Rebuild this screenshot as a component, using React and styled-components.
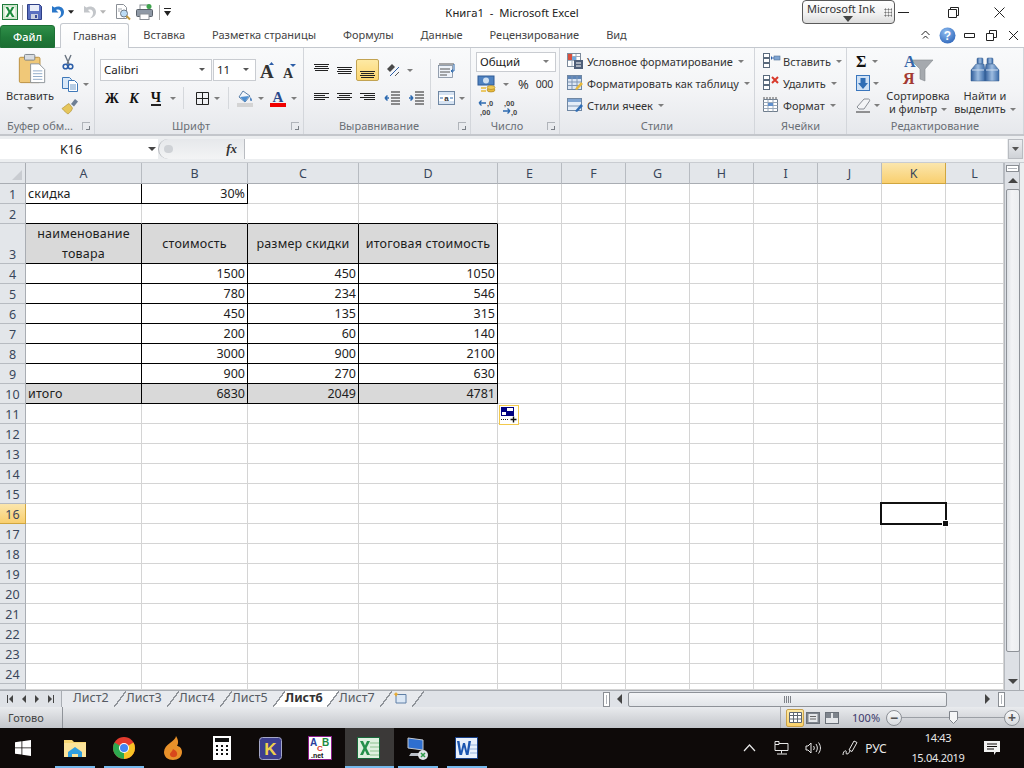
import React from 'react';
import styled, { createGlobalStyle } from 'styled-components';

const GlobalStyle = createGlobalStyle`
  html, body { margin: 0; padding: 0; background: #fff; }
  body { font-family: "Noto Sans", "Open Sans", sans-serif; overflow: hidden; }
  svg { display: block; flex: none; overflow: visible; }
`;

const Page = styled.div`
  width: 1024px;
  height: 768px;
  display: flex;
  flex-direction: column;
  overflow: hidden;
  color: #3b3b3b;
  font-size: 11px;
`;

/* title bar */
const TitleBar = styled.div`
  height: 24px;
  display: grid;
  grid-template-columns: 1fr auto 1fr;
  align-items: center;
  background: #fff;
  flex: none;
`;
const Qat = styled.div`
  display: flex;
  align-items: center;
  padding-left: 2px;
`;
const QatSep = styled.div`
  width: 1px;
  height: 15px;
  background: #a8a8a8;
  margin: 0 ${p => p.$gap || 7}px;
`;
const QatBtn = styled.div`
  display: flex;
  align-items: center;
  margin-right: ${p => p.$mr || 0}px;
`;
const TitleText = styled.div`
  font-size: 11.25px;
  color: #222;
  white-space: pre;
`;
const WindowControls = styled.div`
  display: flex;
  align-items: flex-start;
  justify-content: flex-end;
  height: 24px;
  padding-right: 2px;
`;
const InkBar = styled.div`
  width: 93px;
  height: 24px;
  box-sizing: border-box;
  border: 1px solid #5a5a5a;
  border-radius: 4px;
  background: linear-gradient(#fff, #f0f0f0 60%, #dcdcdc);
  font-size: 11px;
  color: #333;
  padding-left: 4px;
  line-height: 15px;
  position: relative;
  margin-right: 1px;
  white-space: nowrap;
`;
const InkCaret = styled.div`
  width: 0;
  height: 0;
  border: 5px solid transparent;
  border-top: 6px solid #444;
  border-bottom: 0;
  margin-left: 36px;
`;
const InkGrip = styled.div`
  position: absolute;
  right: 2px;
  top: 7px;
  width: 8px;
  height: 9px;
  background-image: radial-gradient(#777 45%, transparent 50%);
  background-size: 3px 3px;
`;
const WinBtn = styled.div`
  width: 46px;
  height: 24px;
  display: flex;
  align-items: center;
  justify-content: center;
  margin-left: ${p => p.$ml || 0}px;
`;

/* tabs */
const TabRow = styled.div`
  height: 24px;
  flex: none;
  display: flex;
  align-items: flex-end;
  background: #fff;
  position: relative;
  box-sizing: border-box;
  border-bottom: 1px solid #c4c8ce;
`;
const FileTab = styled.div`
  width: 55px;
  height: 23px;
  box-sizing: border-box;
  margin-bottom: -1px;
  border-radius: 3px 3px 0 0;
  background: linear-gradient(#2f8f49, #207a39 55%, #1c6e33);
  border: 1px solid #1d7135;
  color: #fff;
  font-size: 11px;
  font-weight: 500;
  text-align: center;
  line-height: 21px;
`;
const Tab = styled.div`
  box-sizing: border-box;
  height: 23px;
  padding: 0 ${p => (p.$active ? 12 : 13.5)}px;
  margin-left: ${p => p.$ml || 0}px;
  font-size: 11px;
  line-height: 22px;
  color: #444;
  white-space: nowrap;
  ${p => p.$active && `
    background: linear-gradient(#fff, #f8f9fa);
    border: 1px solid #c4c8ce;
    border-bottom: 0;
    border-radius: 3px 3px 0 0;
    margin-bottom: -1px;
    z-index: 1;
    height: 25px;
    line-height: 23px;
  `}
`;
const TabTools = styled.div`
  margin-left: auto;
  display: flex;
  align-items: center;
  height: 23px;
`;
const TabTool = styled.div`
  width: 22px;
  display: flex;
  justify-content: center;
`;

/* ribbon */
const Ribbon = styled.div`
  height: 86px;
  flex: none;
  display: flex;
  background: linear-gradient(#f9fafb, #f3f4f6 50%, #e6e8ec);
`;
const Group = styled.div`
  width: ${p => p.$w}px;
  flex: none;
  box-sizing: border-box;
  display: flex;
  flex-direction: column;
  border-right: 1px solid #d3d6db;
`;
const GroupBody = styled.div`
  flex: 1;
  min-height: 0;
  display: flex;
  padding: ${p => p.$pad || '3px 0 0 0'};
`;
const GroupLabel = styled.div`
  height: 15px;
  flex: none;
  position: relative;
  text-align: center;
  line-height: 14px;
  color: #6a6f76;
  font-size: 11px;
  padding-right: ${p => p.$pr || 0}px;
  white-space: nowrap;
`;
const Launcher = styled.div`
  position: absolute;
  right: 4px;
  top: 3px;
  width: 7px;
  height: 7px;
  border-left: 1px solid #b0b4ba;
  border-top: 1px solid #b0b4ba;
  &::after {
    content: '';
    position: absolute;
    right: 0;
    bottom: 0;
    width: 3px;
    height: 3px;
    border-right: 1px solid #7a7f86;
    border-bottom: 1px solid #7a7f86;
  }
`;
const Caret = styled.span`
  display: inline-block;
  flex: none;
  width: 0;
  height: 0;
  border: 3px solid transparent;
  border-top: 3px solid ${p => p.$dark ? '#555' : '#7d7d7d'};
  border-bottom: 0;
  margin: ${p => p.$m || '0 0 0 5px'};
`;
const Column = styled.div`
  display: flex;
  flex-direction: column;
  width: ${p => (p.$w ? `${p.$w}px` : 'auto')};
  gap: ${p => p.$gap || 0}px;
  padding-left: ${p => p.$pl || 0}px;
`;
const Row = styled.div`
  display: flex;
  align-items: center;
  height: ${p => p.$h || 22}px;
  color: #333;
  white-space: nowrap;
  padding-left: ${p => p.$pl || 0}px;
`;
const RowIcon = styled.div`
  width: ${p => p.$w || 20}px;
  flex: none;
  display: flex;
  align-items: center;
`;
const BigButton = styled.div`
  width: ${p => p.$w}px;
  flex: none;
  display: flex;
  flex-direction: column;
  align-items: center;
  line-height: 13px;
  color: #333;
  text-align: center;
  white-space: nowrap;
`;
const BigIcon = styled.div`
  box-sizing: border-box;
  height: ${p => p.$h || 38}px;
  padding: ${p => p.$pad || 0};
  display: flex;
  align-items: flex-start;
  justify-content: center;
`;
const Select = styled.div`
  box-sizing: border-box;
  width: ${p => p.$w}px;
  height: ${p => p.$h || 22}px;
  border: 1px solid #c9ccd1;
  background: #fff;
  display: flex;
  align-items: center;
  justify-content: space-between;
  padding: 0 6px 1px 3px;
  font-size: 11.5px;
  color: #222;
  margin-right: ${p => p.$mr || 0}px;
`;
const ToolSep = styled.div`
  width: 1px;
  height: ${p => p.$h || 22}px;
  background: #d5d8dc;
  margin: 0 ${p => p.$m || 0}px;
  flex: none;
`;
const ToolBox = styled.div`
  width: ${p => p.$w || 22}px;
  height: 22px;
  flex: none;
  display: flex;
  align-items: center;
  justify-content: ${p => p.$justify || 'center'};
  padding-right: ${p => p.$pr || 0}px;
  box-sizing: border-box;
  ${p => p.$on && `
    background: linear-gradient(#fde9a4, #fdd66f);
    border: 1px solid #c2a352;
    border-radius: 2px;
  `}
`;
const BoldGlyph = styled.span`
  font-family: "Liberation Serif", serif;
  font-weight: 700;
  font-style: ${p => (p.$i ? 'italic' : 'normal')};
  font-size: ${p => p.$s || 14}px;
  color: #111;
  border-bottom: ${p => (p.$u ? '2px solid #222' : '0')};
  line-height: 13px;
`;
const NumText = styled.span`
  font-size: ${p => p.$s || 12}px;
  color: #333;
  margin: ${p => p.$m || 0};
  letter-spacing: ${p => p.$ls || 0}px;
`;

/* formula bar */
const FormulaBar = styled.div`
  flex: none;
  height: 29px;
  box-sizing: border-box;
  padding: 5px 0 3px;
  display: flex;
  background: linear-gradient(#c3c6cb 0, #c3c6cb 2px, #eceef0 2px);
  border-bottom: 1px solid #c9ccd1;
`;
const NameBox = styled.div`
  width: 158px;
  flex: none;
  background: #fff;
  display: flex;
  align-items: center;
  font-size: 12.5px;
  color: #222;
  padding-left: 60px;
  box-sizing: border-box;
  position: relative;
`;
const NameCaret = styled.div`
  position: absolute;
  right: 2px;
  top: 8px;
  width: 0;
  height: 0;
  border: 4px solid transparent;
  border-top: 4px solid #444;
  border-bottom: 0;
`;
const FxArea = styled.div`
  width: 87px;
  flex: none;
  background: linear-gradient(#e6e8eb, #f3f4f5);
  border-right: 1px solid #b9bcc1;
  box-sizing: border-box;
  border-radius: 11px 0 0 11px;
  border-left: 1px solid #b4b7bc;
  display: flex;
  align-items: center;
  justify-content: flex-end;
  padding-right: 7px;
  position: relative;
  font-family: "Liberation Serif", serif;
  font-style: italic;
  font-weight: 700;
  font-size: 13px;
  color: #333;
`;
const FxDot = styled.div`
  position: absolute;
  left: 5px;
  top: 6px;
  width: 9px;
  height: 8px;
  border-radius: 4px;
  background: #cfd2d6;
`;
const FormulaInput = styled.div`
  flex: 1;
  background: #fff;
`;
const ExpandBtn = styled.div`
  width: 15px;
  flex: none;
  margin: 0 1px;
  background: linear-gradient(#eceef1, #cfd2d7);
  border: 1px solid #b9bcc1;
  box-sizing: border-box;
  display: flex;
  align-items: center;
  justify-content: center;
`;

/* sheet */
const SheetArea = styled.div`
  height: 527px;
  flex: none;
  display: flex;
  background: #fff;
`;
const Grid = styled.div`
  width: 1004px;
  flex: none;
  display: grid;
  grid-template-columns: 26px 116px 106px 111px 139px repeat(7, 64px) 58px;
  grid-template-rows: 21px 20px 20px 40px repeat(21, 20px) 6px;
  overflow: hidden;
  font-size: 12.5px;
  color: #1d1d1d;
`;
const Corner = styled.div`
  background: #e3e6ea;
  border-right: 1px solid #a9adb3;
  border-bottom: 1px solid #a9adb3;
  position: relative;
  &::after {
    content: '';
    position: absolute;
    right: 3px;
    bottom: 3px;
    border: 5px solid transparent;
    border-right: 5px solid #c9ccd1;
    border-bottom: 5px solid #c9ccd1;
  }
`;
const ColHead = styled.div`
  background: ${p => (p.$sel ? 'linear-gradient(#fbe6ad, #f9cf6f)' : '#e3e6ea')};
  border-right: 1px solid ${p => (p.$sel ? '#d0a63f' : '#b7bbc1')};
  border-bottom: 1px solid ${p => (p.$sel ? '#d0a63f' : '#a9adb3')};
  display: flex;
  align-items: center;
  justify-content: center;
  color: #39465a;
  font-size: 12.5px;
`;
const RowHead = styled.div`
  background: ${p => (p.$sel ? 'linear-gradient(#fbe6ad, #f9cf6f)' : '#e3e6ea')};
  border-right: 1px solid ${p => (p.$sel ? '#d0a63f' : '#a9adb3')};
  border-bottom: 1px solid ${p => (p.$sel ? '#d0a63f' : '#b7bbc1')};
  display: flex;
  align-items: flex-end;
  justify-content: center;
  color: #39465a;
  font-size: 12.5px;
  line-height: 17px;
`;
const Cell = styled.div`
  box-sizing: border-box;
  min-width: 0;
  position: relative;
  background: ${p => (p.$fill ? '#d9d9d9' : '#fff')};
  border-right: 1px solid ${p => (p.$r ? '#000' : '#d4d4d4')};
  border-bottom: 1px solid ${p => (p.$b ? '#000' : '#d4d4d4')};
  display: flex;
  align-items: ${p => (p.$head ? 'center' : 'flex-end')};
  justify-content: ${p => p.$align || 'flex-start'};
  text-align: ${p => (p.$head ? 'center' : 'left')};
  padding: ${p => (p.$head ? '1px 2px 0' : '0 2px')};
  line-height: ${p => (p.$head ? 20 : 18)}px;
  letter-spacing: ${p => (p.$align === 'flex-end' ? 0 : 0.2)}px;
  white-space: ${p => (p.$head ? 'normal' : 'nowrap')};
`;
const CursorBox = styled.div`
  position: absolute;
  left: -2px;
  top: -2px;
  width: 67px;
  height: 23px;
  box-sizing: border-box;
  border: 2px solid #111;
  z-index: 3;
  &::after {
    content: '';
    position: absolute;
    right: -4px;
    bottom: -4px;
    width: 5px;
    height: 5px;
    background: #111;
    border: 1px solid #fff;
  }
`;
const SmartTag = styled.div`
  position: absolute;
  left: 1px;
  top: 1px;
  width: 20px;
  height: 20px;
  box-sizing: border-box;
  border: 1px solid #f2c94c;
  background: #fff;
  z-index: 3;
  display: flex;
  align-items: center;
  justify-content: center;
`;
const VScroll = styled.div`
  flex: 1;
  background: #dde0e5;
  border-left: 1px solid #b6bac0;
  display: flex;
  flex-direction: column;
  align-items: center;
  box-sizing: border-box;
  border-right: 4px solid #eceef0;
  box-shadow: inset -1px 0 0 #a9adb3;
  padding-top: 2px;
`;
const Splitter = styled.div`
  box-sizing: border-box;
  width: ${p => p.$w || 13}px;
  height: ${p => p.$h || 7}px;
  border: 1px solid #8a8e94;
  background: #fff;
  flex: none;
  display: flex;
  align-items: center;
  justify-content: center;
  &::after {
    content: '';
    background: #b0b4ba;
    width: ${p => (p.$v ? '1px' : '9px')};
    height: ${p => (p.$v ? '9px' : '1px')};
  }
`;
const ArrowBox = styled.div`
  height: ${p => p.$h || 16}px;
  flex: none;
  display: flex;
  align-items: ${p => p.$align || 'center'};
  justify-content: center;
  padding-bottom: ${p => p.$pb || 0}px;
  box-sizing: border-box;
`;
const VThumb = styled.div`
  width: 14px;
  flex: 1;
  box-sizing: border-box;
  border: 1px solid #8e9298;
  border-radius: 2px;
  background: linear-gradient(90deg, #dfe2e6, #f3f4f6 40%, #eceef0);
`;

/* sheet tabs */
const SheetBar = styled.div`
  height: 17px;
  flex: none;
  display: flex;
  align-items: stretch;
  background: #dfe2e7;
  border-top: 1px solid #a9adb3;
  box-sizing: border-box;
`;
const TabNav = styled.div`
  width: 62px;
  flex: none;
  display: flex;
  align-items: center;
  justify-content: space-around;
  padding: 0 3px;
  box-sizing: border-box;
  border-right: 1px solid #a9adb3;
`;
const SheetTabs = styled.div`
  width: 541px;
  flex: none;
  display: flex;
`;
const SheetTab = styled.div`
  position: relative;
  width: ${p => p.$w || 53}px;
  box-sizing: border-box;
  padding-left: ${p => p.$pl || 11}px;
  background: ${p => (p.$active ? '#fff' : '#e8eaee')};
  font-size: 12.5px;
  font-weight: ${p => (p.$active ? 700 : 400)};
  color: ${p => (p.$active ? '#333' : '#565b63')};
  line-height: 14px;
  white-space: nowrap;
  &::after {
    content: '';
    position: absolute;
    right: -11px;
    top: 0;
    z-index: 1;
    width: 12px;
    height: 16px;
    background: linear-gradient(to bottom right, ${p => (p.$active ? '#fff' : '#e8eaee')} 47%, #8f9399 47%, #8f9399 54%, transparent 54%);
  }
`;
const HScrollZone = styled.div`
  flex: 1;
  display: flex;
  align-items: center;
`;
const HThumb = styled.div`
  width: 319px;
  height: 15px;
  flex: none;
  box-sizing: border-box;
  border: 1px solid #8e9298;
  border-radius: 2px;
  background: linear-gradient(#f4f5f7, #e2e5e9);
  display: flex;
  align-items: center;
  justify-content: center;
`;
const Grip = styled.div`
  width: 7px;
  height: 7px;
  background: repeating-linear-gradient(90deg, #7f8389 0, #7f8389 1px, transparent 1px, transparent 2px);
`;

/* status bar */
const StatusBar = styled.div`
  height: 21px;
  flex: none;
  display: flex;
  align-items: center;
  background: linear-gradient(#e9ebee, #d6d8dc 50%, #c3c6cb);
  color: #444;
  font-size: 11px;
`;
const StatusText = styled.div`
  width: 63px;
  padding-left: 8px;
  box-sizing: border-box;
  border-right: 1px solid #8f9399;
  line-height: 21px;
  height: 21px;
`;
const StatusRight = styled.div`
  margin-left: auto;
  display: flex;
  align-items: center;
  height: 21px;
  border-left: 1px solid #a5a8ae;
  padding-left: 5px;
`;
const ViewBtn = styled.div`
  width: ${p => p.$w || 18}px;
  height: 18px;
  box-sizing: border-box;
  display: flex;
  align-items: center;
  justify-content: center;
  ${p => p.$on && `
    background: linear-gradient(#fde9a4, #fbd26a);
    border: 1px solid #c9a24b;
    border-radius: 2px;
  `}
`;
const ZoomText = styled.div`
  color: #3d3a6b;
  width: 27px;
  margin: 0 7px 0 10px;
  font-size: 11px;
`;
const RoundBtn = styled.div`
  width: 16px;
  height: 16px;
  flex: none;
  box-sizing: border-box;
  border-radius: 50%;
  border: 1px solid #8b8f95;
  background: linear-gradient(#f8f9fa, #d7dade);
  display: flex;
  align-items: center;
  justify-content: center;
  font-size: 14px;
  line-height: 12px;
  font-weight: 700;
  color: #555;
`;
const SliderTrack = styled.div`
  width: 102px;
  height: 1px;
  background: #9b9fa5;
  position: relative;
  flex: none;
`;
const SliderThumb = styled.div`
  position: absolute;
  left: 47px;
  top: -6px;
`;

/* task bar */
const TaskBar = styled.div`
  height: 40px;
  flex: none;
  display: flex;
  background: #0e0a09;
  color: #e8e8e8;
`;
const StartBtn = styled.div`
  width: 51px;
  flex: none;
  display: flex;
  align-items: center;
  justify-content: center;
  padding-right: 5px;
  box-sizing: border-box;
`;
const TaskItem = styled.div`
  width: 49px;
  flex: none;
  box-sizing: border-box;
  display: flex;
  align-items: center;
  justify-content: center;
  padding-right: 2px;
  background: ${p => (p.$active ? '#3b3938' : 'transparent')};
  position: relative;
  &::after {
    content: '';
    display: ${p => (p.$open ? 'block' : 'none')};
    position: absolute;
    left: ${p => (p.$active ? 0 : 4)}px;
    right: ${p => (p.$active ? 0 : 5)}px;
    bottom: 0;
    height: 2px;
    background: #76b9ed;
  }
`;
const Tray = styled.div`
  margin-left: auto;
  display: flex;
  align-items: center;
  padding-right: 24px;
`;
const TrayIcon = styled.div`
  width: ${p => p.$w}px;
  margin-left: ${p => p.$ml || 0}px;
  display: flex;
  justify-content: center;
  flex: none;
`;
const Lang = styled.div`
  width: 34px;
  text-align: center;
  font-size: 12px;
`;
const Clock = styled.div`
  width: 60px;
  margin: 0 16px 0 15px;
  text-align: center;
  font-size: 11px;
  letter-spacing: -0.3px;
  line-height: 20px;
`;

/* icons */
const ExcelLogo = ({ s = 16 }) => (
  <svg width={s} height={s} viewBox="0 0 16 16">
    <rect x=".5" y=".5" width="15" height="15" fill="#e9f3e6" stroke="#1e7a3a" />
    <rect x="2" y="2" width="12" height="12" fill="#f6fbf2" stroke="#8dc28f" strokeWidth=".6" />
    <path d="M3.500 3l3 5-3 5h2.500l2-3.600 2 3.600h2.600l-3.200-5 3-5h-2.500L8 6.500 6.100 3z" fill="#1c8a3e" />
  </svg>
);
const Save = () => (
  <svg width="15" height="16" viewBox="0 0 15 16">
    <path d="M.5.500h12l2 2v13H.5z" fill="#5a6fc0" stroke="#2e3f86" />
    <rect x="3" y="1" width="9" height="6" fill="#e9edf8" />
    <rect x="4" y="10" width="7" height="5" fill="#c8cede" />
    <rect x="8" y="11" width="2" height="3" fill="#3c4c98" />
  </svg>
);
const Undo = ({ c = '#2a77c9' }) => (
  <svg width="14" height="15" viewBox="0 0 14 15">
    <path d="M1 1v6.500h6.500L5 5c3-1.500 5.500.5 5 3.500-.3 2-1.300 3.500-3 5 4-1 6-3.500 6-6.500 0-4.500-5-7-9.500-4.500L1 1z" fill={c} />
  </svg>
);
const SmallCaret = ({ c = '#222', w = 7 }) => (
  <svg width={w} height="4" viewBox="0 0 7 4"><path d="M0 0h7L3.500 4z" fill={c} /></svg>
);
const Preview = () => (
  <svg width="16" height="16" viewBox="0 0 16 16">
    <path d="M1.500.500h7l3 3v11h-10z" fill="#fff" stroke="#8a8f96" />
    <circle cx="9" cy="9.500" r="3.500" fill="#bcdcf5" stroke="#6d7a88" />
    <path d="M11.500 12l3.500 3.500" stroke="#c29a3e" strokeWidth="2" />
    <path d="M3 5h4M3 7h2" stroke="#a7abb1" />
  </svg>
);
const Printer = () => (
  <svg width="17" height="16" viewBox="0 0 17 16">
    <rect x="4" y="1" width="9" height="5" fill="#fff" stroke="#8a8f96" />
    <rect x=".5" y="5.500" width="16" height="7" rx="1" fill="#8f99a6" stroke="#59616b" />
    <rect x="4" y="10" width="9" height="5.500" fill="#fff" stroke="#8a8f96" />
    <circle cx="13" cy="2.500" r="2.500" fill="#3fa34d" />
  </svg>
);
const QatMenu = () => (
  <svg width="7" height="8" viewBox="0 0 7 8"><path d="M0 0h7v1H0zM0 3h7L3.500 8z" fill="#222" /></svg>
);
const WinLine = ({ d, w = 11 }) => (
  <svg width={w} height={w} viewBox="0 0 11 11"><path d={d} fill="none" stroke="#222" /></svg>
);
const Help = () => (
  <svg width="17" height="17" viewBox="0 0 17 17">
    <defs>
      <radialGradient id="hlp" cx=".4" cy=".3" r=".8"><stop offset="0" stopColor="#8fbdf0" /><stop offset="1" stopColor="#2a62b8" /></radialGradient>
    </defs>
    <circle cx="8.500" cy="8.500" r="8" fill="url(#hlp)" />
    <text x="8.500" y="13" textAnchor="middle" fontSize="12" fontWeight="700" fill="#fff" fontFamily="Liberation Sans">?</text>
  </svg>
);
const Paste = () => (
  <svg width="28" height="30" viewBox="0 0 28 32">
    <rect x=".5" y="3.500" width="22" height="27" rx="1.500" fill="#f0c878" stroke="#b98d3c" />
    <rect x="6" y=".5" width="11" height="6" rx="1" fill="#d9dde2" stroke="#7d838a" />
    <path d="M12.500 10.500h9l6 6v14h-15z" fill="#fff" stroke="#8c9299" />
    <path d="M15 18h10M15 21h10M15 24h10M15 27h10" stroke="#8da9c8" />
  </svg>
);
const Scissors = () => (
  <svg width="12" height="15" viewBox="0 0 12 15">
    <path d="M3 0l4 9M9 0L5 9" stroke="#6a7480" strokeWidth="1.400" />
    <circle cx="3.500" cy="11.500" r="2.300" fill="none" stroke="#2c5ea8" strokeWidth="1.600" />
    <circle cx="8.500" cy="11.500" r="2.300" fill="none" stroke="#2c5ea8" strokeWidth="1.600" />
  </svg>
);
const Copy = () => (
  <svg width="16" height="15" viewBox="0 0 16 15">
    <path d="M.5.500h7l2 2v9h-9z" fill="#d9e8f8" stroke="#3f78b8" />
    <path d="M6.500 3.500h6l3 3v8h-9z" fill="#fff" stroke="#3f78b8" />
    <path d="M8 8h6M8 10h6M8 12h6" stroke="#6f9bcb" />
  </svg>
);
const Brush = () => (
  <svg width="16" height="15" viewBox="0 0 16 15">
    <path d="M9 5l4-5 3 2.500-4 5z" fill="#6e7f95" />
    <path d="M10.500 9L7 4.500C4 6 2.500 8 0 9.500 2 12 4.500 14 6 15c2-1.500 4-3.500 4.500-6z" fill="#e6c65c" stroke="#a98a2a" strokeWidth=".6" />
  </svg>
);
const FontGrow = () => (
  <svg width="15" height="17" viewBox="0 0 15 17">
    <text x="0" y="16" fontFamily="Liberation Serif" fontWeight="700" fontSize="19" fill="#333">A</text>
    <path d="M9 3l2.500-3L14 3z" fill="#2c5ea8" />
  </svg>
);
const FontShrink = () => (
  <svg width="15" height="17" viewBox="0 0 15 17">
    <text x="1" y="16" fontFamily="Liberation Serif" fontWeight="700" fontSize="14" fill="#333">A</text>
    <path d="M8 2h6l-3 3z" fill="#2c5ea8" />
  </svg>
);
const Borders = () => (
  <svg width="13" height="13" viewBox="0 0 13 13">
    <path d="M.5.500h12v12H.5zM6.500.500v12M.5 6.500h12" fill="none" stroke="#222" />
  </svg>
);
const FillBucket = () => (
  <svg width="16" height="17" viewBox="0 0 16 17">
    <path d="M6 1l7 5-5 6-6-5z" fill="#f3f6fa" stroke="#5a7fa8" />
    <path d="M3 7l9-1-4 6z" fill="#4d8ed0" />
    <path d="M13.500 7c1.500 2 1.500 3.500 1 4s-2-.5-1-4z" fill="#2c6ab0" />
    <rect x="0" y="13" width="16" height="4" fill="#d4d4d4" />
  </svg>
);
const FontColor = () => (
  <svg width="16" height="17" viewBox="0 0 16 17">
    <text x="2.500" y="12" fontFamily="Liberation Serif" fontWeight="700" fontSize="15" fill="#2a4a8c">A</text>
    <rect x="0" y="13" width="16" height="4" fill="#f00000" />
  </svg>
);
const AlignLines = ({ rows, y = 2, gap = 2 }) => (
  <svg width="15" height="15" viewBox="0 0 15 15">
    {rows.map(([x, w], i) => (
      <rect key={i} x={x} y={y + i * gap} width={w} height="1" fill="#222" />
    ))}
  </svg>
);
const Orientation = () => (
  <svg width="16" height="15" viewBox="0 0 16 15">
    <path d="M2 6l5-5 3 3-5 5z" fill="#4a4a4a" />
    <path d="M5 13l9-9" stroke="#2c5ea8" />
    <path d="M10 13l4-4" stroke="#555" />
  </svg>
);
const Indent = ({ flip }) => (
  <svg width="16" height="15" viewBox="0 0 16 15">
    <path d="M7 1h9M7 4h9M7 7h9M7 10h9M7 13h9" stroke="#222" />
    <path d={flip ? 'M5 7L1 7M1 7l2.500-2.500M1 7l2.500 2.500' : 'M1 7h4M5 7L2.500 4.500M5 7L2.500 9.500'} stroke="#2c6ab0" strokeWidth="1.500" fill="none" />
  </svg>
);
const WrapText = () => (
  <svg width="17" height="15" viewBox="0 0 17 15">
    <rect x=".5" y="2.500" width="14" height="12" fill="#eef3fa" stroke="#7d8b9c" strokeWidth=".8" />
    <path d="M1 1h15M2 6h10M2 9h10M2 12h7" stroke="#555" />
    <path d="M16 1v7h-3M13 8l2-1.500M13 8l2 1.500" stroke="#2c6ab0" fill="none" />
  </svg>
);
const Merge = () => (
  <svg width="17" height="14" viewBox="0 0 17 14">
    <rect x=".5" y=".5" width="16" height="13" fill="#d6e3f2" stroke="#6f87a3" />
    <rect x="1" y="4" width="15" height="6" fill="#fff" />
    <text x="8.500" y="10" textAnchor="middle" fontSize="8" fontWeight="700" fill="#333" fontFamily="Liberation Sans">a</text>
    <path d="M2 7h3M15 7h-3" stroke="#2c6ab0" />
  </svg>
);
const Money = () => (
  <svg width="19" height="17" viewBox="0 0 19 17">
    <rect x="0" y="0" width="16" height="9" fill="#4f82c0" stroke="#2f5b96" />
    <ellipse cx="8" cy="4.500" rx="3" ry="3" fill="#cfe0f2" />
    <ellipse cx="13" cy="14" rx="4" ry="2" fill="#e8b93a" stroke="#a47f1f" strokeWidth=".6" />
    <ellipse cx="13" cy="11.500" rx="4" ry="2" fill="#f1cb57" stroke="#a47f1f" strokeWidth=".6" />
    <path d="M3 12h5M3 15h5" stroke="#e8b93a" strokeWidth="1.500" />
  </svg>
);
const DecimalIcon = ({ more }) => (
  <svg width="17" height="17" viewBox="0 0 17 17">
    <text x={more ? 2 : 9} y="7" fontSize="7.500" fontWeight="700" fill="#444" fontFamily="Liberation Sans">{more ? ',00' : ',0'}</text>
    <text x={more ? 9 : 2} y="16" fontSize="7.500" fontWeight="700" fill="#444" fontFamily="Liberation Sans">{more ? ',0' : ',00'}</text>
    <path d={more ? 'M1 12h7M8 12L5.500 9.500M8 12l-2.500 2.500' : 'M1 4h7M1 4l2.500-2.500M1 4l2.500 2.500'} stroke="#2c6ab0" strokeWidth="1.300" fill="none" />
  </svg>
);
const TableCond = () => (
  <svg width="16" height="16" viewBox="0 0 16 16">
    <rect x=".5" y=".5" width="13" height="13" fill="#fff" stroke="#7d8b9c" />
    <path d="M1 3.500h12M1 7.500h12M5 1v12M9 1v12" stroke="#9caabb" />
    <rect x="1" y="1" width="4" height="6" fill="#d94f3d" />
    <rect x="5" y="4" width="4" height="3" fill="#6fa8dc" />
    <rect x="7" y="7" width="9" height="9" fill="#4e5e78" />
    <path d="M9 10h5M9 13h5" stroke="#fff" />
  </svg>
);
const TableFormat = () => (
  <svg width="16" height="16" viewBox="0 0 16 16">
    <rect x=".5" y=".5" width="14" height="14" fill="#dbe6f4" stroke="#6f87a3" />
    <rect x="1" y="1" width="13" height="3" fill="#5f86b8" />
    <path d="M1 7h13M1 10.500h13M5 1v13M10 1v13" stroke="#7e95b3" />
    <path d="M8 14l6-7 2 2-6 6z" fill="#e8b93a" />
  </svg>
);
const CellStyle = () => (
  <svg width="16" height="16" viewBox="0 0 16 16">
    <rect x=".5" y="1.500" width="14" height="12" fill="#e4edf8" stroke="#6f87a3" />
    <rect x="1" y="2" width="13" height="3" fill="#7ea4d2" />
    <path d="M1 9h13" stroke="#7e95b3" />
    <path d="M8 14l6-7 2 2-6 6z" fill="#2f6db5" />
  </svg>
);
const CellInsert = ({ del }) => (
  <svg width="17" height="16" viewBox="0 0 17 16">
    <rect x=".5" y=".5" width="6" height="4" fill="#fff" stroke="#5a6a7c" />
    <rect x=".5" y="5.500" width="6" height="4" fill="#fff" stroke="#5a6a7c" />
    <rect x=".5" y="10.500" width="6" height="4" fill="#fff" stroke="#5a6a7c" />
    {del
      ? <path d="M9 2l6 6M15 2l-6 6" stroke="#d8392b" strokeWidth="2" />
      : <><rect x="11" y="3" width="6" height="4" fill="#7ea4d2" stroke="#4f6f96" strokeWidth=".6" /><path d="M8 5h3M8.500 3.500v3" stroke="#2c5ea8" /></>}
  </svg>
);
const CellFormat = () => (
  <svg width="16" height="16" viewBox="0 0 16 16">
    <path d="M.5 2.500h14v12H.5z" fill="#fff" stroke="#6f7d8c" />
    <path d="M.5 5.500h14M.5 8.500h14M.5 11.500h14M5 2.500v12M10 2.500v12" stroke="#9aa9ba" />
    <rect x="5" y="6" width="5" height="3" fill="#5f8fcc" />
    <path d="M1 0v2M4 0v2M7 0v2M10 0v2M13 0v2" stroke="#555" />
  </svg>
);
const FillDown = () => (
  <svg width="14" height="16" viewBox="0 0 14 16">
    <rect x=".5" y=".5" width="13" height="15" fill="#cfe1f5" stroke="#3a76bd" />
    <path d="M4.500 3h5v5H12l-5 6-5-6h2.500z" fill="#2f6db5" />
  </svg>
);
const Eraser = () => (
  <svg width="15" height="15" viewBox="0 0 15 15">
    <path d="M1 9l7-8h4.500c1 0 1.500 1 1 2L8 11H3z" fill="#f3f4f6" stroke="#8a8f96" />
    <path d="M0 14h14" stroke="#333" />
  </svg>
);
const SortIcon = () => (
  <svg width="32" height="30" viewBox="0 0 32 30">
    <path d="M9 6h22l-8 9v12l-5-2V15z" fill="#a5a9ae" stroke="#85898f" strokeWidth=".6" />
    <text x="2" y="13" fontFamily="Liberation Serif" fontWeight="700" fontSize="16" fill="#3566a8">A</text>
    <text x="1" y="30" fontFamily="Liberation Serif" fontWeight="700" fontSize="16" fill="#a33a32">Я</text>
  </svg>
);
const Binoculars = () => (
  <svg width="28" height="25" viewBox="0 0 28 25">
    <defs>
      <linearGradient id="bin" x1="0" x2="1"><stop offset="0" stopColor="#2f5c9a" /><stop offset=".5" stopColor="#9dbce0" /><stop offset="1" stopColor="#3a6aa8" /></linearGradient>
    </defs>
    <rect x="6" y="1" width="6" height="6" rx="1" fill="url(#bin)" stroke="#355c8e" strokeWidth=".5" />
    <rect x="16" y="1" width="6" height="6" rx="1" fill="url(#bin)" stroke="#355c8e" strokeWidth=".5" />
    <path d="M5 7h8l1 6v11H0V13z" fill="url(#bin)" stroke="#355c8e" strokeWidth=".5" />
    <path d="M15 7h8l5 6v11H14V13z" fill="url(#bin)" stroke="#355c8e" strokeWidth=".5" />
    <path d="M1 13h12M15 13h12" stroke="#cfdef0" />
  </svg>
);
const Triangle = ({ dir, c = '#444', s = 5 }) => {
  const paths = { l: 'M5 0v10L0 5z', r: 'M0 0v10l5-5z', u: 'M0 5h10L5 0z', d: 'M0 0h10L5 5z' };
  const vert = dir === 'u' || dir === 'd';
  return (
    <svg width={vert ? s * 2 : s} height={vert ? s : s * 2} viewBox={vert ? '0 0 10 5' : '0 0 5 10'}>
      <path d={paths[dir]} fill={c} />
    </svg>
  );
};
const EdgeArrow = ({ left }) => (
  <svg width="6" height="8" viewBox="0 0 6 8">
    <path d={left ? 'M0 0h1v8H0zM6 0v8L2 4z' : 'M6 0H5v8h1zM0 0v8l4-4z'} fill="#444" />
  </svg>
);
const NewSheet = () => (
  <svg width="14" height="13" viewBox="0 0 14 13">
    <path d="M3 3.500h10v8.500H3z" fill="#dbe7f5" stroke="#5f7fa6" />
    <path d="M3 1l1 1.500L5.500 3 4 4 3 6 2 4 .5 3 2 2.500z" fill="#e8a92e" />
  </svg>
);
const SmartTagIcon = () => (
  <svg width="16" height="16" viewBox="0 0 16 16">
    <rect x="0" y="0" width="13" height="9" fill="#000080" />
    <rect x="6" y="1" width="6" height="3" fill="#fff" />
    <rect x="1" y="5" width="4" height="3" fill="#fff" />
    <path d="M0 12.500h8" stroke="#222" strokeDasharray="1 1" />
    <path d="M12.500 9.500v6M9.500 12.500h6" stroke="#111" strokeWidth="1.400" />
  </svg>
);
const ViewNormal = () => (
  <svg width="13" height="11" viewBox="0 0 13 11">
    <path d="M.5.500h12v10H.5zM.5 3.500h12M.5 7h12M4.500.500v10M8.500.500v10" fill="#fff" stroke="#5d6670" />
  </svg>
);
const ViewLayout = () => (
  <svg width="14" height="12" viewBox="0 0 14 12">
    <rect x=".5" y=".5" width="13" height="11" fill="#7e848c" stroke="#6a7078" />
    <rect x="2.500" y="2" width="9" height="8" fill="#e4e6e9" />
    <path d="M4 4.500h6M4 7h6" stroke="#666" />
  </svg>
);
const ViewBreak = () => (
  <svg width="14" height="12" viewBox="0 0 14 12">
    <rect x=".5" y=".5" width="13" height="11" fill="#e4e6e9" stroke="#6a7078" />
    <rect x="1" y="1" width="5" height="5" fill="#7e848c" />
    <rect x="8" y="1" width="5" height="5" fill="#7e848c" />
  </svg>
);
const ZoomThumb = () => (
  <svg width="9" height="13" viewBox="0 0 9 13">
    <path d="M.5.500h8v8l-4 4-4-4z" fill="#f5f6f7" stroke="#7f838a" />
  </svg>
);
const WinLogo = () => (
  <svg width="16" height="16" viewBox="0 0 16 16">
    <path d="M0 2.200l6.500-.9v6.200H0zM7.300 1.200L16 0v7.500H7.300zM0 8.300h6.500v6.300L0 13.800zM7.300 8.300H16V16l-8.700-1.200z" fill="#fff" />
  </svg>
);
const Explorer = () => (
  <svg width="22" height="19" viewBox="0 0 22 19">
    <path d="M0 1h8l2 2h12v15H0z" fill="#f7d774" />
    <path d="M0 4h22v14H0z" fill="#fbe49a" />
    <path d="M4 13l7-5 7 5v5h-4v-3H8v3H4z" fill="#2f9fe0" />
  </svg>
);
const Chrome = () => (
  <svg width="22" height="22" viewBox="0 0 22 22">
    <circle cx="11" cy="11" r="11" fill="#e33b2e" />
    <path d="M11 11L1.500 5.500A11 11 0 0 0 11 22z" fill="#2da94f" />
    <path d="M11 11l9.500-5.500A11 11 0 0 1 11 22z" fill="#f7c325" />
    <circle cx="11" cy="11" r="5" fill="#fff" />
    <circle cx="11" cy="11" r="4" fill="#4285f4" />
  </svg>
);
const Flame = () => (
  <svg width="20" height="24" viewBox="0 0 20 24">
    <path d="M13 0C13 5 1 8 1 16c0 5 4 8 9 8s9-3 9-8c0-4-3-6-5-6 2-3 1-7-1-10z" fill="#e8912a" />
    <path d="M10 13c2 1 5 3 4 6-1 3-6 3-7 0-.6-2 2-3 3-6z" fill="#d8481c" />
  </svg>
);
const Calc = () => (
  <svg width="18" height="24" viewBox="0 0 18 24">
    <rect width="18" height="24" fill="#fff" />
    <rect x="2" y="2" width="14" height="4" fill="#111" />
    {[9, 13, 17].map(y => [3, 8, 13].map(x => <rect key={`${x}${y}`} x={x} y={y} width="2" height="2" fill="#111" />))}
  </svg>
);
const KLogo = () => (
  <svg width="23" height="23" viewBox="0 0 23 23">
    <rect x=".5" y=".5" width="22" height="22" rx="3" fill="#3d3f8f" stroke="#a5a8c8" />
    <text x="11.500" y="18" textAnchor="middle" fontSize="17" fontWeight="700" fill="#f1d04b" fontFamily="Liberation Sans">K</text>
  </svg>
);
const AbcNet = () => (
  <svg width="24" height="24" viewBox="0 0 24 24">
    <rect x=".5" y=".5" width="23" height="23" fill="#fff" stroke="#8b1f8b" />
    <text x="2" y="10" fontSize="10" fontWeight="700" fill="#2a3f9e" fontFamily="Liberation Sans">A</text>
    <text x="14" y="10" fontSize="10" fontWeight="700" fill="#1c8a3e" fontFamily="Liberation Sans">B</text>
    <text x="9" y="15" fontSize="8" fontWeight="700" fill="#d8392b" fontFamily="Liberation Sans">C</text>
    <text x="3" y="22" fontSize="7" fontWeight="700" fill="#111" fontFamily="Liberation Sans">.net</text>
  </svg>
);
const ExcelBig = () => (
  <svg width="23" height="23" viewBox="0 0 23 23">
    <rect x=".5" y=".5" width="22" height="21" fill="#dff0e0" stroke="#17693a" />
    <path d="M13 6h9M13 10h9M13 14h9M13 18h9" stroke="#8dc28f" />
    <path d="M3 4l3.500 7L3 18h3l2-4.500 2 4.500h3l-3.500-7L13 4h-3L8 8.500 6 4z" fill="#25904c" />
  </svg>
);
const RemoteIcon = () => (
  <svg width="23" height="25" viewBox="0 0 23 25">
    <path d="M2 2l15 2v10L2 12z" fill="#2e6fd0" stroke="#c4c9d0" />
    <path d="M5 17h12l2 3H3z" fill="#b9bec6" />
    <circle cx="17" cy="19" r="5" fill="#dfe2e6" />
    <path d="M15 21l4-4M15 17l4 4" stroke="#2f9a4a" strokeWidth="1.500" />
  </svg>
);
const WordBig = () => (
  <svg width="23" height="23" viewBox="0 0 23 23">
    <rect x=".5" y=".5" width="22" height="21" fill="#e8f0fb" stroke="#173f86" />
    <path d="M15 8h7M15 12h7M15 16h7" stroke="#97b4dc" />
    <path d="M2 4h2.500L6 14l2-8h2l2 8 1.500-10H16l-2.500 14h-2.500L9 10l-2 8H4.500z" fill="#1c56b0" />
  </svg>
);
const TrayChevron = () => (
  <svg width="13" height="8" viewBox="0 0 13 8"><path d="M1 7l5.500-6L12 7" fill="none" stroke="#e8e8e8" strokeWidth="1.200" /></svg>
);
const NetIcon = () => (
  <svg width="17" height="14" viewBox="0 0 17 14">
    <path d="M2 .5h4v3H2zM2 3.500v6h13V2.500H6M8.500 9.500v3M4 13h10" fill="none" stroke="#e8e8e8" />
  </svg>
);
const Volume = () => (
  <svg width="17" height="14" viewBox="0 0 17 14">
    <path d="M1 5h2l3-3v10L3 9H1zM8.500 5c1 1.300 1 2.700 0 4M11 3c1.800 2.500 1.800 5.500 0 8M13.500 1.500c2.600 3.500 2.600 7.500 0 11" fill="none" stroke="#e8e8e8" />
  </svg>
);
const PenIcon = () => (
  <svg width="17" height="16" viewBox="0 0 17 16">
    <path d="M7 10l5-9 3 1.500-5 9zM1 15c0-3 2-5 3-4s-1 3 1 3 2-2 3-3" fill="none" stroke="#e8e8e8" />
  </svg>
);
const Notify = () => (
  <svg width="16" height="15" viewBox="0 0 16 15">
    <path d="M0 0h16v11h-4l-2 3v-3H0z" fill="#f2f2f2" />
    <path d="M3 3h10M3 5.500h10M3 8h7" stroke="#0e0a09" />
  </svg>
);

/* data */
const columns = ['A', 'B', 'C', 'D', 'E', 'F', 'G', 'H', 'I', 'J', 'K', 'L'];
const table = [
  ['', 1500, 450, 1050],
  ['', 780, 234, 546],
  ['', 450, 135, 315],
  ['', 200, 60, 140],
  ['', 3000, 900, 2100],
  ['', 900, 270, 630],
  ['итого', 6830, 2049, 4781],
];
const headers = ['наименование товара', 'стоимость', 'размер скидки', 'итоговая стоимость'];

const rowCells = n => {
  if (n === 1) return [
    <Cell key="a" $r $b>скидка</Cell>,
    <Cell key="b" $r $b $align="flex-end">30%</Cell>,
  ];
  if (n === 2) return [0, 1, 2, 3].map(i => <Cell key={i} $b />);
  if (n === 3) return headers.map((h, i) => (
    <Cell key={i} $r $b $fill $head $align="center">{h}</Cell>
  ));
  if (n >= 4 && n <= 10) return table[n - 4].map((v, i) => (
    <Cell key={i} $r $b $fill={n === 10} $align={i ? 'flex-end' : 'flex-start'}>{v}</Cell>
  ));
  return [];
};

const SheetRow = ({ n }) => {
  const cells = rowCells(n);
  const rest = columns.slice(cells.length);
  return (
    <>
      <RowHead $sel={n === 16}>{n <= 24 ? n : ''}</RowHead>
      {cells}
      {rest.map(c => (
        <Cell key={c}>
          {n === 11 && c === 'E' && <SmartTag><SmartTagIcon /></SmartTag>}
          {n === 16 && c === 'K' && <CursorBox />}
        </Cell>
      ))}
    </>
  );
};

const rowNumbers = Array.from({ length: 25 }, (_, i) => i + 1);

const l = { left: [[0, 15], [0, 11], [0, 15], [0, 11]], mid: [[0, 15], [2, 11], [0, 15], [2, 11]], right: [[0, 15], [4, 11], [0, 15], [4, 11]] };
const v = [[0, 15], [1, 13], [0, 15], [1, 13]];

export default function App() {
  return (
    <Page>
      <GlobalStyle />
      <TitleBar>
        <Qat>
          <ExcelLogo />
          <QatSep $gap={4} />
          <QatBtn $mr={9}><Save /></QatBtn>
          <QatBtn $mr={3}><Undo /></QatBtn>
          <QatBtn $mr={9}><SmallCaret w={6} /></QatBtn>
          <QatBtn $mr={3}><Undo c="#c3c6ca" /></QatBtn>
          <QatBtn $mr={9}><SmallCaret c="#b5b5b5" w={6} /></QatBtn>
          <QatBtn $mr={5}><Preview /></QatBtn>
          <QatBtn $mr={2}><Printer /></QatBtn>
          <QatSep $gap={4} />
          <QatMenu />
        </Qat>
        <TitleText>Книга1  -  Microsoft Excel</TitleText>
        <WindowControls>
          <InkBar>
            Microsoft Ink
            <InkCaret />
            <InkGrip />
          </InkBar>
          <WinBtn $ml={-16}><WinLine d="M0 5.500h11" /></WinBtn>
          <WinBtn $ml={4}><WinLine d="M.5 2.500h8v8h-8zM2.500 2.500v-2h8v8h-2" /></WinBtn>
          <WinBtn><WinLine d="M.5.500l10 10M10.500.500l-10 10" /></WinBtn>
        </WindowControls>
      </TitleBar>

      <TabRow>
        <FileTab>Файл</FileTab>
        <Tab $active $ml={5}>Главная</Tab>
        <Tab $ml={0.5}>Вставка</Tab>
        <Tab>Разметка страницы</Tab>
        <Tab>Формулы</Tab>
        <Tab>Данные</Tab>
        <Tab>Рецензирование</Tab>
        <Tab>Вид</Tab>
        <TabTools>
          <TabTool><WinLine d="M1.500 5L5.500 1l4 4M3 8.500l2.500-2.500 2.500 2.500" /></TabTool>
          <TabTool><Help /></TabTool>
          <TabTool><WinLine d="M.5 3.500h10v4H.5z" /></TabTool>
          <TabTool><WinLine d="M.5 3.500h7v7h-7zM3.500 3.500v-3h7v7h-3" /></TabTool>
          <TabTool><WinLine d="M1 1l9 9M10 1l-9 9" /></TabTool>
        </TabTools>
      </TabRow>

      <Ribbon>
        <Group $w={95}>
          <GroupBody>
            <BigButton $w={60}>
              <BigIcon $pad="3px 0 0 4px"><Paste /></BigIcon>
              Вставить
              <Caret $m="5px 0 0 0" />
            </BigButton>
            <Column $pl={2}>
              <Row><Scissors /></Row>
              <Row><Copy /><Caret /></Row>
              <Row><Brush /></Row>
            </Column>
          </GroupBody>
          <GroupLabel $pr={14}>Буфер обм...<Launcher /></GroupLabel>
        </Group>

        <Group $w={209}>
          <GroupBody $pad="11px 0 0 5px">
            <Column $gap={6}>
              <Row>
                <Select $w={112} $mr={1}>Calibri<Caret $dark /></Select>
                <Select $w={43} $mr={4}>11<Caret $dark /></Select>
                <FontGrow />
                <ToolBox $w={7} />
                <FontShrink />
              </Row>
              <Row $pl={1}>
                <ToolBox><BoldGlyph>Ж</BoldGlyph></ToolBox>
                <ToolBox><BoldGlyph $i>К</BoldGlyph></ToolBox>
                <ToolBox><BoldGlyph $u>Ч</BoldGlyph></ToolBox>
                <Caret $m="0 0 0 3px" />
                <ToolSep $m={7} />
                <ToolBox><Borders /></ToolBox>
                <Caret $m="0 0 0 1px" />
                <ToolSep $m={8} />
                <FillBucket />
                <Caret />
                <ToolBox $w={6} />
                <FontColor />
                <Caret />
              </Row>
            </Column>
          </GroupBody>
          <GroupLabel $pr={16}>Шрифт<Launcher /></GroupLabel>
        </Group>

        <Group $w={167}>
          <GroupBody $pad="11px 0 0 6px">
            <Column $gap={6}>
              <Row>
                <ToolBox $w={23}><AlignLines rows={v} y={1} /></ToolBox>
                <ToolBox $w={23}><AlignLines rows={v} y={4} /></ToolBox>
                <ToolBox $w={23} $on><AlignLines rows={v} y={8} /></ToolBox>
                <ToolBox $w={28}><Orientation /></ToolBox>
                <Caret $m="0" />
              </Row>
              <Row>
                <ToolBox $w={23}><AlignLines rows={l.left} /></ToolBox>
                <ToolBox $w={23}><AlignLines rows={l.mid} /></ToolBox>
                <ToolBox $w={23}><AlignLines rows={l.right} /></ToolBox>
                <ToolBox $w={26}><Indent flip /></ToolBox>
                <ToolBox $w={21}><Indent /></ToolBox>
              </Row>
            </Column>
            <ToolSep $h={50} $m={4} />
            <Column $gap={6} $pl={3}>
              <Row><WrapText /></Row>
              <Row><Merge /><Caret $m="0 0 0 4px" /></Row>
            </Column>
          </GroupBody>
          <GroupLabel $pr={16}>Выравнивание<Launcher /></GroupLabel>
        </Group>

        <Group $w={89}>
          <GroupBody $pad="4px 0 0 5px">
            <Column>
              <Select $w={80} $h={20}>Общий<Caret /></Select>
              <Row $h={24} $pl={2}>
                <Money />
                <Caret $m="0 0 0 6px" />
                <NumText $s={13} $m="0 0 0 9px">%</NumText>
                <NumText $s={10.5} $ls={-0.3} $m="0 0 0 7px">000</NumText>
              </Row>
              <Row $h={22} $pl={2}>
                <DecimalIcon />
                <ToolBox $w={7} />
                <DecimalIcon more />
              </Row>
            </Column>
          </GroupBody>
          <GroupLabel $pr={16}>Число<Launcher /></GroupLabel>
        </Group>

        <Group $w={195}>
          <GroupBody $pad="2px 0 0 7px">
            <Column>
              <Row><RowIcon><TableCond /></RowIcon>Условное форматирование<Caret /></Row>
              <Row><RowIcon><TableFormat /></RowIcon>Форматировать как таблицу<Caret /></Row>
              <Row><RowIcon><CellStyle /></RowIcon>Стили ячеек<Caret /></Row>
            </Column>
          </GroupBody>
          <GroupLabel>Стили</GroupLabel>
        </Group>

        <Group $w={92}>
          <GroupBody $pad="2px 0 0 8px">
            <Column>
              <Row><RowIcon><CellInsert /></RowIcon>Вставить<Caret /></Row>
              <Row><RowIcon><CellInsert del /></RowIcon>Удалить<Caret /></Row>
              <Row><RowIcon><CellFormat /></RowIcon>Формат<Caret /></Row>
            </Column>
          </GroupBody>
          <GroupLabel>Ячейки</GroupLabel>
        </Group>

        <Group $w={177}>
          <GroupBody $pad="2px 0 0 9px">
            <Column $w={27}>
              <Row><BoldGlyph $s={16}>Σ</BoldGlyph><Caret $m="0 0 0 6px" /></Row>
              <Row><FillDown /><Caret $m="0 0 0 3px" /></Row>
              <Row><Eraser /><Caret $m="0 0 0 3px" /></Row>
            </Column>
            <BigButton $w={70}>
              <BigIcon $h={39} $pad="4px 0 0 0"><SortIcon /></BigIcon>
              Сортировка
              <div>и фильтр<Caret $m="0 0 2px 4px" /></div>
            </BigButton>
            <BigButton $w={64}>
              <BigIcon $h={39} $pad="7px 0 0 0"><Binoculars /></BigIcon>
              Найти и
              <div>выделить<Caret $m="0 0 2px 4px" /></div>
            </BigButton>
          </GroupBody>
          <GroupLabel>Редактирование</GroupLabel>
        </Group>
      </Ribbon>

      <FormulaBar>
        <NameBox>K16<NameCaret /></NameBox>
        <FxArea>
          <FxDot />
          fx
        </FxArea>
        <FormulaInput />
        <ExpandBtn><SmallCaret c="#555" /></ExpandBtn>
      </FormulaBar>

      <SheetArea>
        <Grid>
          <Corner />
          {columns.map(c => <ColHead key={c} $sel={c === 'K'}>{c}</ColHead>)}
          {rowNumbers.map(n => <SheetRow key={n} n={n} />)}
        </Grid>
        <VScroll>
          <Splitter />
          <ArrowBox $h={17}><Triangle dir="u" /></ArrowBox>
          <VThumb />
          <ArrowBox $h={38} $align="flex-end" $pb={6}><Triangle dir="d" /></ArrowBox>
        </VScroll>
      </SheetArea>

      <SheetBar>
        <TabNav>
          <EdgeArrow left />
          <Triangle dir="l" s={4} />
          <Triangle dir="r" s={4} />
          <EdgeArrow />
        </TabNav>
        <SheetTabs>
          <SheetTab>Лист2</SheetTab>
          <SheetTab>Лист3</SheetTab>
          <SheetTab>Лист4</SheetTab>
          <SheetTab>Лист5</SheetTab>
          <SheetTab $active $w={54}>Лист6</SheetTab>
          <SheetTab>Лист7</SheetTab>
          <SheetTab $pl={12} $w={32}><NewSheet /></SheetTab>
        </SheetTabs>
        <HScrollZone>
          <Splitter $w={7} $h={15} $v />
          <ArrowBox><ToolBox $w={18}><Triangle dir="l" /></ToolBox></ArrowBox>
          <HThumb><Grip /></HThumb>
          <ToolBox $w={51} $justify="flex-end" $pr={8}><Triangle dir="r" /></ToolBox>
          <Splitter $w={7} $h={15} $v />
        </HScrollZone>
      </SheetBar>

      <StatusBar>
        <StatusText>Готово</StatusText>
        <StatusRight>
          <ViewBtn $on><ViewNormal /></ViewBtn>
          <ViewBtn><ViewLayout /></ViewBtn>
          <ViewBtn $w={20}><ViewBreak /></ViewBtn>
          <ZoomText>100%</ZoomText>
          <RoundBtn>−</RoundBtn>
          <SliderTrack><SliderThumb><ZoomThumb /></SliderThumb></SliderTrack>
          <RoundBtn>+</RoundBtn>
          <ToolBox $w={4} />
        </StatusRight>
      </StatusBar>

      <TaskBar>
        <StartBtn><WinLogo /></StartBtn>
        <TaskItem $open><Explorer /></TaskItem>
        <TaskItem $open><Chrome /></TaskItem>
        <TaskItem><Flame /></TaskItem>
        <TaskItem><Calc /></TaskItem>
        <TaskItem><KLogo /></TaskItem>
        <TaskItem><AbcNet /></TaskItem>
        <TaskItem $open $active><ExcelBig /></TaskItem>
        <TaskItem $open><RemoteIcon /></TaskItem>
        <TaskItem $open><WordBig /></TaskItem>
        <Tray>
          <TrayIcon $w={32}><TrayChevron /></TrayIcon>
          <TrayIcon $w={32}><NetIcon /></TrayIcon>
          <TrayIcon $w={32}><Volume /></TrayIcon>
          <TrayIcon $w={18} $ml={12}><PenIcon /></TrayIcon>
          <Lang>РУС</Lang>
          <Clock>14:43<br />15.04.2019</Clock>
          <Notify />
        </Tray>
      </TaskBar>
    </Page>
  );
}
